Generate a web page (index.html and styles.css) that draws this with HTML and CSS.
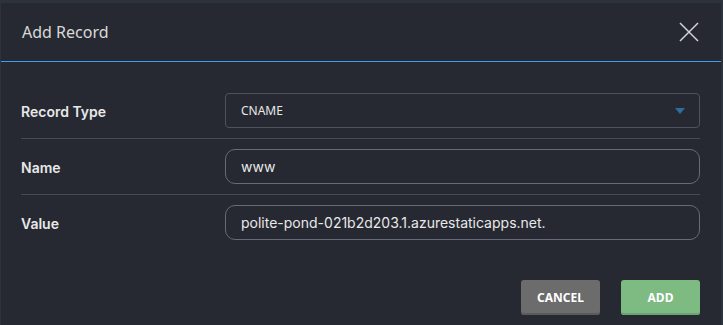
FILE: index.html
```html
<!DOCTYPE html>
<html lang="en">
<head>
    <meta charset="UTF-8">
    <meta name="viewport" content="width=device-width, initial-scale=1.0">
    <title>Add Record</title>
    <link rel="stylesheet" href="styles.css">
</head>
<body>
    <div class="modal">
        <div class="modal-header">
            <h2 class="modal-title">Add Record</h2>
            <button class="close" aria-label="Close">
                <svg width="20" height="20" viewBox="0 0 20 20">
                    <path d="M1 1L19 19M19 1L1 19" stroke="#d4d4d4" stroke-width="1.5" fill="none"/>
                </svg>
            </button>
        </div>
        <div class="modal-body">
            <div class="form-row">
                <label class="label">Record Type</label>
                <div class="select">
                    <span>CNAME</span>
                    <span class="caret"></span>
                </div>
            </div>
            <div class="form-row">
                <label class="label">Name</label>
                <input class="input" type="text" value="www">
            </div>
            <div class="form-row last">
                <label class="label">Value</label>
                <input class="input" type="text" value="polite-pond-021b2d203.1.azurestaticapps.net.">
            </div>
        </div>
        <div class="modal-footer">
            <button class="btn btn-cancel">CANCEL</button>
            <button class="btn btn-add">ADD</button>
        </div>
    </div>
</body>
</html>
```

FILE: styles.css
```css
body {
    margin: 0;
    height: 325px;
    overflow: hidden;
    background-color: #2c333d;
    font-family: "Noto Sans", sans-serif;
}

.modal {
    margin: 3px 0 0 1px;
    width: 720px;
    height: 330px;
    background-color: #262932;
}

.modal-header {
    display: flex;
    justify-content: space-between;
    align-items: center;
    height: 58px;
    padding: 0 21px;
    border-bottom: 1px solid #3f9ef0;
}

.modal-title {
    margin: 0;
    font-size: 16px;
    font-weight: 400;
    color: #d9d9d9;
}

.close {
    display: flex;
    padding: 0;
    margin-right: 1px;
    background: none;
    border: none;
    cursor: pointer;
}

.modal-body {
    padding: 21px 21px 0 20px;
}

.form-row {
    display: flex;
    align-items: center;
    padding: 10px 0;
    border-bottom: 1px solid #474a55;
}

.form-row.last {
    border-bottom: none;
}

.label {
    width: 204px;
    padding-top: 1px;
    font-family: Inter, sans-serif;
    font-size: 14px;
    font-weight: 600;
    color: #e8e8e8;
}

.select,
.input {
    flex: 1;
    box-sizing: border-box;
    height: 35px;
    padding: 0 15px;
    background-color: #262932;
    font-family: Inter, sans-serif;
    font-size: 14px;
    color: #e8e8e8;
}

.select {
    display: flex;
    justify-content: space-between;
    align-items: center;
    border: 1px solid #4e525f;
    border-radius: 4px;
    font-family: "Noto Sans", sans-serif;
    font-size: 12px;
}

.caret {
    width: 0;
    height: 0;
    margin-right: -1px;
    border-left: 5px solid transparent;
    border-right: 5px solid transparent;
    border-top: 6px solid #2f6e9c;
}

.input {
    border: 1px solid #666a7b;
    border-radius: 10px;
    outline: none;
}

.modal-footer {
    display: flex;
    justify-content: flex-end;
    gap: 21px;
    padding: 30px 21px 0;
}

.btn {
    width: 79px;
    height: 35px;
    border: none;
    border-radius: 3px;
    font-family: "Noto Sans", sans-serif;
    font-size: 12px;
    font-weight: 700;
    color: #fff;
    cursor: pointer;
}

.btn-cancel {
    background-color: #6c6c6c;
    box-shadow: inset 0 -2px 0 #5a5a5a;
}

.btn-add {
    background-color: #7dbb82;
    box-shadow: inset 0 -2px 0 #6aa56f;
}
```
